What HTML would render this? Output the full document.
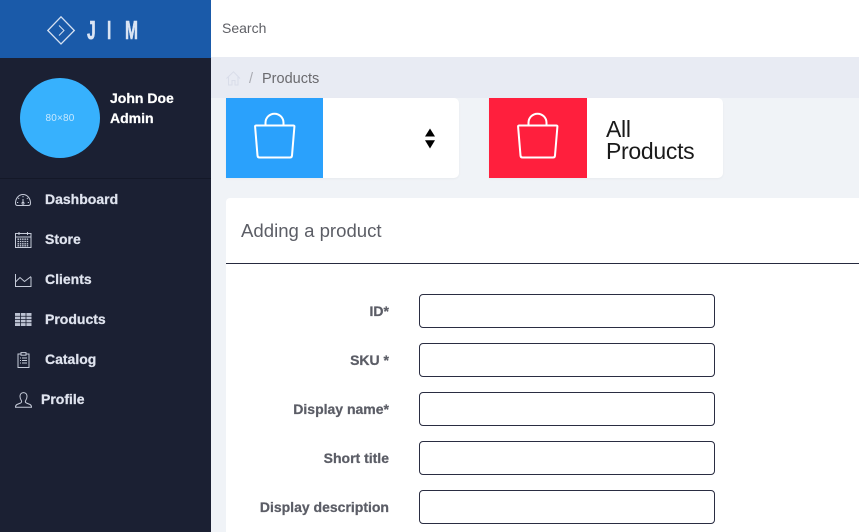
<!DOCTYPE html>
<html>
<head>
<meta charset="utf-8">
<style>
html,body{margin:0;padding:0;width:859px;height:532px;overflow:hidden;background:#f0f3f7;font-family:"Liberation Sans",sans-serif}
.a{position:absolute}
.t{position:absolute;white-space:nowrap}
#side{left:0;top:0;width:211px;height:532px;background:#1b2033}
#brand{left:0;top:0;width:211px;height:58px;background:#1a5aa9}
.m{font-weight:bold;font-size:14px;color:#dfe3ee;line-height:20px;height:20px;-webkit-text-stroke:.25px #dfe3ee}
.l{font-weight:bold;font-size:14px;color:#5b5d66;line-height:20px;right:470px;text-align:right;-webkit-text-stroke:.25px #5b5d66}
.i{position:absolute;left:419px;width:294px;height:32px;border:1.3px solid #2a2d42;border-radius:4px;background:#fff}
.card{position:absolute;top:98px;height:80px;background:#fff;border-radius:0 5px 5px 0;box-shadow:0 1px 2px rgba(0,0,0,.04)}
.logo{top:16px;font-size:26px;line-height:28px;color:#dbe5f4;font-weight:bold;transform:scaleX(.6);transform-origin:0 0;-webkit-text-stroke:.6px #dbe5f4}
svg{position:absolute;overflow:visible}
</style>
</head>
<body>
<div class="a" style="left:211px;top:0;width:648px;height:57px;background:#fff"></div>
<div class="t" style="left:222px;top:19px;font-size:14px;line-height:18px;color:#5f6066">Search</div>
<div class="a" style="left:211px;top:57px;width:648px;height:41px;background:#e8ebf3"></div>
<svg style="left:226px;top:71px" width="15" height="15" viewBox="0 0 15 15" fill="none" stroke="#d9dde9" stroke-width="1"><path d="M.5 7.500 7.500.8l6.500 6.700M2.500 6v8h3.500V9.500h3V14h3V6"/></svg>
<div class="t" style="left:249px;top:70px;font-size:14.500px;line-height:18px;color:#a9abb2">/</div>
<div class="t" style="left:262px;top:70px;font-size:14.500px;line-height:18px;color:#6a6a6e">Products</div>

<div class="a" id="side"></div>
<div class="a" id="brand"></div>
<svg style="left:47px;top:16px" width="28" height="29" viewBox="0 0 28 29" fill="none" stroke="#d5e1f2" stroke-width="1.300"><path d="M14 .8 27.300 14.500 14 28 .8 14.500Z"/><path d="M12 9.500l5 5-5 5" stroke-width="1"/></svg>
<div class="t logo" style="left:87px">J</div>
<div class="t logo" style="left:106.500px">I</div>
<div class="t logo" style="left:125px">M</div>

<div class="a" style="left:20px;top:78px;width:80px;height:80px;border-radius:50%;background:#37b1fd"></div>
<div class="t" style="left:20px;top:113px;width:80px;text-align:center;font-size:10px;line-height:12px;letter-spacing:.2px;color:#c8e9ff">80×80</div>
<div class="t" style="left:110px;top:88px;font-weight:bold;font-size:14px;line-height:20px;color:#fff;-webkit-text-stroke:.25px #fff">John Doe<br>Admin</div>
<div class="a" style="left:0;top:178px;width:211px;height:1px;background:#141828"></div>

<svg style="left:15px;top:194px" width="16" height="12" viewBox="0 0 16 12" fill="none" stroke="#c6cbd9" stroke-width="1"><path d="M2.500 11.500h11c1.300 0 2-.7 2-2.500A7.500 8.500 0 0 0 .5 9c0 1.800.7 2.500 2 2.500Z"/><path d="M8 2v1.200M3.300 4l.8.8M12.700 4l-.8.8M2 8.500h1.200M12.800 8.500H14M8 5v4"/><circle cx="8" cy="9.300" r="1"/></svg>
<div class="t m" style="left:45px;top:189px">Dashboard</div>
<svg style="left:15px;top:232px" width="17" height="16" viewBox="0 0 17 16" fill="none" stroke="#c6cbd9" stroke-width="1"><rect x=".5" y="1.500" width="15.500" height="14"/><path d="M.5 5h15.500M4 0v3M12.500 0v3"/><path d="M2.500 7.200h11.500M2.500 9.500h11.500M2.500 11.800h11.500M2.500 13.800h11.500" stroke-dasharray="1.500 .8" stroke-width="1.300"/></svg>
<div class="t m" style="left:45px;top:229px">Store</div>
<svg style="left:15px;top:274px" width="17" height="13" viewBox="0 0 17 13" fill="none" stroke="#c6cbd9" stroke-width="1"><path d="M.5 0v12.500h15.500V3"/><path d="M.5 8 5 3.500 9.500 7.500 16 2.500"/></svg>
<div class="t m" style="left:45px;top:269px">Clients</div>
<svg style="left:15px;top:313px" width="17" height="13" viewBox="0 0 17 13" fill="none"><rect x="0" y="0" width="16.500" height="13" fill="#bcc2d2"/><path d="M5.500 0v13M11 0v13M0 3.250h16.500M0 6.500h16.500M0 9.750h16.500" stroke="#1b2033" stroke-width=".8"/></svg>
<div class="t m" style="left:45px;top:309px">Products</div>
<svg style="left:17px;top:352px" width="13" height="16" viewBox="0 0 13 16" fill="none" stroke="#c6cbd9" stroke-width="1"><path d="M4 2H1v13.500h11V2H9"/><rect x="4" y=".6" width="5" height="2.600"/><path d="M3 6h1M5 6h5M3 8.500h1M5 8.500h5M3 11h1M5 11h5"/></svg>
<div class="t m" style="left:45px;top:349px">Catalog</div>
<svg style="left:15px;top:392px" width="17" height="16" viewBox="0 0 17 16" fill="none" stroke="#c6cbd9" stroke-width="1"><path d="M8.500.6C6 .6 5 2.500 5 4.500c0 2 .8 3.300 1.400 4.200.4.800.2 1.800-.8 2.300L2 12.500c-1 .5-1.500 1.100-1.500 2.800h16c0-1.700-.5-2.300-1.500-2.800L11.400 11c-1-.5-1.200-1.500-.8-2.300C11.200 7.800 12 6.500 12 4.500 12 2.500 11 .6 8.500.6Z"/></svg>
<div class="t m" style="left:41px;top:389px">Profile</div>

<div class="card" style="left:226px;width:233px"></div>
<div class="a" style="left:226px;top:98px;width:97px;height:80px;background:#2aa1fc"></div>
<svg style="left:254px;top:113px" width="41" height="46" viewBox="0 0 41 46" fill="none" stroke="#fff" stroke-width="2" stroke-linejoin="round"><path d="M2 12.500H39.500C40.200 12.500 40.500 13 40.400 13.700L38 42.500C37.900 43.800 37.200 44.500 36 44.500H5.500C4.300 44.500 3.600 43.800 3.500 42.500L1.100 13.700C1 13 1.300 12.500 2 12.500Z"/><path d="M11.500 12V9.700a9 9 0 0 1 18 0V12"/></svg>
<svg style="left:424px;top:128px" width="12" height="21" viewBox="0 0 12 21" fill="#000"><path d="M6 .5 11 8.500H1Z"/><path d="M1 12.200h10L6 20.500Z"/></svg>

<div class="card" style="left:489px;width:234px"></div>
<div class="a" style="left:489px;top:98px;width:98px;height:80px;background:#ff1f3d"></div>
<svg style="left:517px;top:113px" width="41" height="46" viewBox="0 0 41 46" fill="none" stroke="#fff" stroke-width="2" stroke-linejoin="round"><path d="M2 12.500H39.500C40.200 12.500 40.500 13 40.400 13.700L38 42.500C37.900 43.800 37.200 44.500 36 44.500H5.500C4.300 44.500 3.600 43.800 3.500 42.500L1.100 13.700C1 13 1.300 12.500 2 12.500Z"/><path d="M11.500 12V9.700a9 9 0 0 1 18 0V12"/></svg>
<div class="t" style="left:606px;top:119px;font-size:23px;line-height:21.500px;color:#1a1a1a;letter-spacing:-.3px">All<br>Products</div>

<div class="a" style="left:226px;top:198px;width:633px;height:334px;background:#fff;border-radius:4px 0 0 0"></div>
<div class="t" style="left:241px;top:219px;font-size:18.600px;line-height:24px;color:#5c5e66">Adding a product</div>
<div class="a" style="left:226px;top:263px;width:633px;height:1px;background:#262a3f"></div>

<div class="t l" style="top:301px">ID*</div>
<div class="i" style="top:294px"></div>
<div class="t l" style="top:350px">SKU *</div>
<div class="i" style="top:343px"></div>
<div class="t l" style="top:399px">Display name*</div>
<div class="i" style="top:392px"></div>
<div class="t l" style="top:448px">Short title</div>
<div class="i" style="top:441px"></div>
<div class="t l" style="top:497px">Display description</div>
<div class="i" style="top:490px"></div>
</body>
</html>
